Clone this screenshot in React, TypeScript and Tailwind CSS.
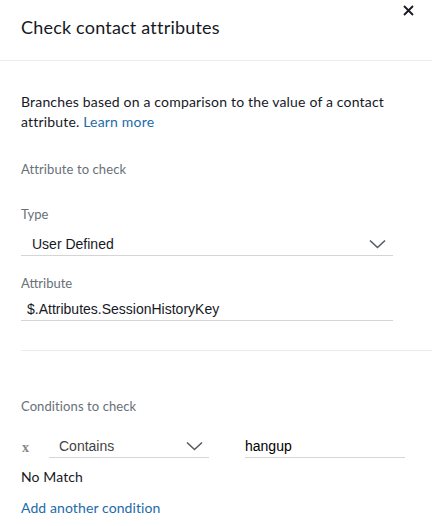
import React from "react";

const Chevron = () => (
  <svg width="17" height="10" viewBox="0 0 17 10" fill="none">
    <path d="M1 1.5 L8.5 8.5 L16 1.5" stroke="#545b64" strokeWidth="1.6" />
  </svg>
);

export default function App() {
  return (
    <div className="w-[432px] h-[526px] bg-white overflow-hidden text-[#16191f]" style={{ fontFamily: "Lato, 'Open Sans', sans-serif" }}>
      <div className="relative h-[61px] border-b border-[#eaeded]">
        <h1 className="absolute left-[21px] top-[15px] text-[18px] leading-[24px] font-normal tracking-[0.2px] text-[#16191f]">Check contact attributes</h1>
        <button className="absolute left-[403px] top-[5px] w-[11px] h-[11px]">
          <svg width="11" height="11" viewBox="0 0 11 11">
            <path d="M1 1 L10 10 M10 1 L1 10" stroke="#16191f" strokeWidth="1.8" />
          </svg>
        </button>
      </div>
      <div className="pl-[21px]">
        <p className="mt-[31px] pr-[30px] text-[14px] leading-[20px] tracking-[0.18px]">
          Branches based on a comparison to the value of a contact attribute.{" "}
          <a className="text-[#1d6ba8]">Learn more</a>
        </p>
        <div className="mt-[27px] text-[13px] leading-[20px] tracking-[0.1px] text-[#687078]">Attribute to check</div>
        <div className="mt-[25px] text-[13px] leading-[20px] text-[#687078]">Type</div>
        <div className="mt-[8px] w-[372px] h-[24px] border-b border-[#d5d5d5] flex items-center justify-between pl-[11px] pr-[7px]" style={{ fontFamily: "'Liberation Sans', Arial, sans-serif" }}>
          <span className="text-[14px] leading-[20px] text-[#16191f]">User Defined</span>
          <Chevron />
        </div>
        <div className="mt-[17px] text-[13px] leading-[20px] text-[#687078]">Attribute</div>
        <div className="mt-[4px] w-[372px] h-[24px] border-b border-[#d5d5d5] flex items-center pl-[6px]" style={{ fontFamily: "'Liberation Sans', Arial, sans-serif" }}>
          <span className="text-[14px] leading-[20px] text-[#16191f]">$.Attributes.SessionHistoryKey</span>
        </div>
        <div className="mt-[29px] border-t border-[#eaeded]" />
        <div className="mt-[45px] text-[13px] leading-[20px] tracking-[0.1px] text-[#687078]">Conditions to check</div>
        <div className="mt-[18px] flex items-end h-[24px]">
          <span className="w-[28px] pl-[1px] text-[14px] leading-[20px] font-bold text-[#888]" style={{ fontFamily: "'Liberation Serif', serif" }}>x</span>
          <div className="w-[160px] h-[24px] border-b border-[#d5d5d5] flex items-center justify-between pl-[10px] pr-[6px]" style={{ fontFamily: "'Liberation Sans', Arial, sans-serif" }}>
            <span className="text-[14px] leading-[20px] text-[#444]">Contains</span>
            <Chevron />
          </div>
          <div className="ml-[36px] w-[160px] h-[24px] border-b border-[#d5d5d5] flex items-center" style={{ fontFamily: "'Liberation Sans', Arial, sans-serif" }}>
            <span className="text-[14px] leading-[20px] text-black">hangup</span>
          </div>
        </div>
        <div className="mt-[9px] text-[14px] leading-[20px] tracking-[0.1px]">No Match</div>
        <div className="mt-[11px] text-[14px] leading-[20px] tracking-[0.1px] text-[#1d6ba8]">Add another condition</div>
      </div>
    </div>
  );
}
